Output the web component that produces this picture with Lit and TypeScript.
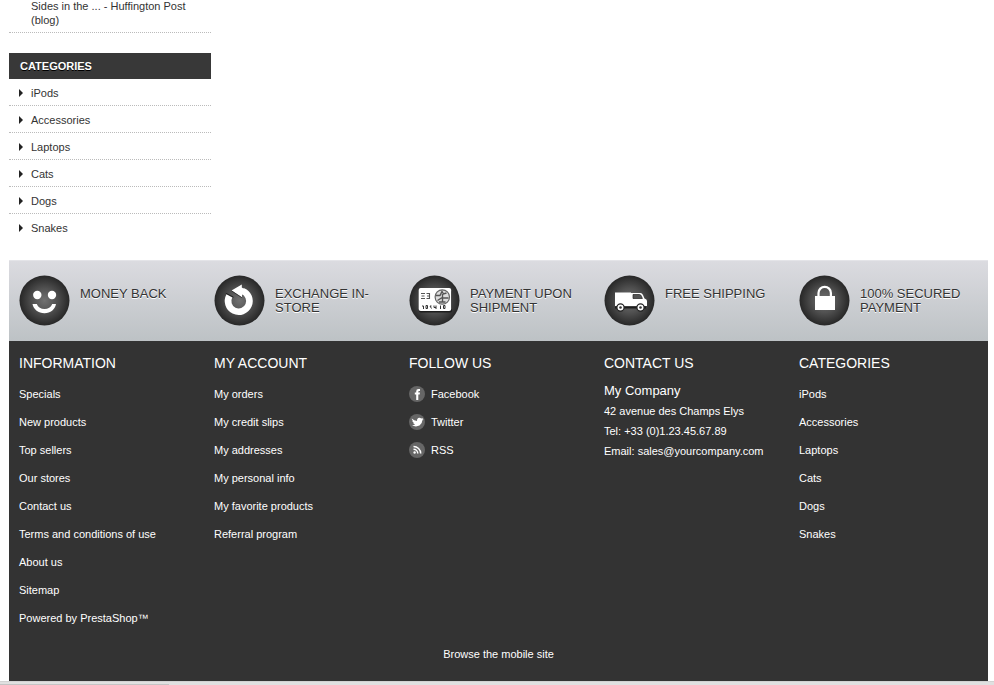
import { LitElement, html, css, svg } from "lit";
import { customElement } from "lit/decorators.js";

const categories = ["iPods", "Accessories", "Laptops", "Cats", "Dogs", "Snakes"];

const information = [
  "Specials",
  "New products",
  "Top sellers",
  "Our stores",
  "Contact us",
  "Terms and conditions of use",
  "About us",
  "Sitemap",
  "Powered by PrestaShop™",
];

const account = [
  "My orders",
  "My credit slips",
  "My addresses",
  "My personal info",
  "My favorite products",
  "Referral program",
];

const smile = svg`
  <circle cx="18.300" cy="20" r="4.200" fill="#fff"/>
  <circle cx="33" cy="20" r="4.200" fill="#fff"/>
  <path d="M13.500 29H17.800C19 32.500 22 34 25.500 34S32 32.500 33.200 29H37C36 34.500 31.500 38.200 25.500 38.200S14.500 34.500 13.500 29Z" fill="#fff"/>`;

const exchange = svg`
  <path d="M15.400 20.800A10.700 10.700 0 1 0 28.500 16" fill="none" stroke="#fff" stroke-width="6.600"/>
  <path d="M11.800 18.200L19.500 22.200" stroke="#222" stroke-width="1"/>
  <path d="M17.500 15.600L27.800 9.600V12.600L31 14.500L28 19.500V22.500Z" fill="#fff"/>
  <path d="M17.500 15.800L28 22.700" stroke="#222" stroke-width=".8"/>`;

const card = svg`
  <rect x="10" y="15" width="33" height="22.500" rx="2" fill="#1c1c1c"/>
  <rect x="9.700" y="13" width="32.500" height="23" rx="2" fill="#fff"/>
  <path d="M12 18.500h4M12.500 21h3M12 23.500h4M17.500 18.500h3.500M18 21h2.500M17.500 23.500h3.500M20.500 18v6" stroke="#555" stroke-width="1.100"/>
  <circle cx="33.300" cy="22" r="7.200" fill="#ddd" stroke="#666" stroke-width="1.200"/>
  <path d="M27 20.500h4l2-4 1.500 2.500 3-1M28.500 25.500l4-2.500h7M33.500 19v8.500M30 27h6.500" fill="none" stroke="#555" stroke-width="1.400"/>
  <path d="M13 31h1.500v3M17 30.500v3h1.500v-3zM22.500 31h-1.500l1.500 2.500M25 30.500v2h2M27 30.500v3.500M31.500 30.500v3.500M34.500 30.500h1.500v3h-1.500z" fill="none" stroke="#333" stroke-width="1"/>`;

const truck = svg`
  <path d="M11 32.500H42" stroke="#1c1c1c" stroke-width="2"/>
  <path d="M11 17.500H27V18H36.500Q38 18 39 20L40.500 23.500Q43 24 43 26V31H11Z" fill="#fff"/>
  <path d="M29 19.500h6.500q1.300 0 2 1.800l.9 2.200H29Z" fill="#555" stroke="#222" stroke-width=".7"/>
  <circle cx="16.500" cy="32.500" r="3.600" fill="#fff" stroke="#222" stroke-width="1.200"/>
  <circle cx="16.500" cy="32.500" r="1.300" fill="#333"/>
  <circle cx="36.500" cy="32.500" r="3.600" fill="#fff" stroke="#222" stroke-width="1.200"/>
  <circle cx="36.500" cy="32.500" r="1.300" fill="#333"/>`;

const padlock = svg`
  <path d="M19.500 21V18a6.200 6.200 0 0 1 12.400 0V21" fill="none" stroke="#fff" stroke-width="2.200"/>
  <rect x="16" y="21" width="20" height="14" fill="#fff"/>`;

const benefits = [
  { label: "Money back", art: smile },
  { label: "Exchange in-store", art: exchange },
  { label: "Payment upon shipment", art: card },
  { label: "Free shipping", art: truck },
  { label: "100% secured payment", art: padlock },
];

const networks = [
  {
    label: "Facebook",
    art: svg`<path d="M7.200 14V8.600H5.800V6.600H7.200V5.300Q7.200 3 9.500 3H11V5H10Q9.300 5 9.300 5.700V6.600H11L10.700 8.600H9.300V14Z" fill="#fff"/>`,
  },
  {
    label: "Twitter",
    art: svg`<path d="M2.800 4.500Q5 6.800 8 6.900Q7.900 4 10.300 3.800Q11.500 3.800 12.200 4.500L14 4L13.300 5.200L14.500 5.400L13.300 6.600Q13.200 10 10.500 11.600Q6.500 13.300 3 11.300Q5 11.300 6.200 10.300Q4.500 10 4 8.800H5Q3.200 7.900 3.200 6.400L4 6.600Q2.500 5.600 2.800 4.500Z" fill="#fff"/>`,
  },
  {
    label: "RSS",
    art: svg`<circle cx="5.600" cy="10.500" r="1.200" fill="#fff"/><path d="M4.500 7.300A4.300 4.300 0 0 1 8.800 11.600M4.500 4.500A7.200 7.200 0 0 1 11.700 11.600" fill="none" stroke="#fff" stroke-width="1.500"/>`,
  },
];

@customElement("app-root")
export class AppRoot extends LitElement {
  static styles = css`
    :host {
      display: flow-root;
      background: #fff;
      color: #333;
      font: 11px/14px "Liberation Sans", Arial, sans-serif;
    }
    a {
      color: inherit;
      text-decoration: none;
    }
    h2,
    h3,
    p,
    ul {
      margin: 0;
      padding: 0;
      font-weight: normal;
    }
    ul {
      list-style: none;
    }
    .page {
      margin: -1px 6px 0 9px;
    }
    .sidebar {
      width: 202px;
      padding-bottom: 20px;
    }
    .news {
      padding: 0 22px 5px;
      border-bottom: 1px dotted #bbb;
      margin-bottom: 20px;
    }
    .side-title {
      padding: 0 11px;
      background: #383838;
      color: #fff;
      font-size: 11px;
      font-weight: bold;
      line-height: 26px;
      text-transform: uppercase;
      text-shadow: 0 1px 0 #000;
    }
    .side-list li {
      display: flex;
      align-items: center;
      gap: 8px;
      padding: 7px 10px 5px;
      border-bottom: 1px dotted #bbb;
    }
    .side-list li:last-child {
      border-bottom: 0;
    }
    .side-list li::before {
      content: "";
      border: 4px solid transparent;
      border-left-color: #222;
      border-right-width: 0;
    }
    .columns {
      display: grid;
      grid-template-columns: repeat(5, minmax(0, 1fr));
      column-gap: 16px;
      padding: 0 10px;
    }
    .benefits {
      box-sizing: border-box;
      min-height: 81px;
      padding-top: 14px;
      border-top: 1px solid #e4e4e8;
      background: linear-gradient(#dbdbe0, #bdc2c5);
    }
    .benefits li {
      display: flex;
      gap: 10px;
      font-size: 13px;
      text-transform: uppercase;
      text-shadow: 0 1px 0 #fff;
    }
    .benefits span {
      padding-top: 12px;
    }
    .badge {
      flex: none;
      width: 51px;
      height: 51px;
    }
    .footer {
      background: #333;
      color: #fff;
    }
    .footer .columns {
      padding-top: 15px;
    }
    .footer h2 {
      margin-bottom: 10px;
      font-size: 14px;
      text-transform: uppercase;
    }
    .footer li {
      display: flex;
      align-items: center;
      gap: 6px;
      height: 28px;
    }
    .footer svg {
      width: 16px;
      height: 16px;
    }
    .footer h3 {
      padding: 3px 0 2px;
      font-size: 13px;
      line-height: 16px;
    }
    .footer address {
      font-style: normal;
      line-height: 20px;
    }
    .mobile {
      padding: 15px 0 20px;
      text-align: center;
    }
    .status {
      height: 3px;
      border-top: 1px solid #d2d2d2;
      background: #e0e0e0;
    }
    .status::before {
      content: "";
      display: block;
      width: 17%;
      height: 1px;
      border-top: 2px solid #e0e0e0;
      background: #c4c4c4;
    }
  `;

  private links(items: string[]) {
    return html`<ul>
      ${items.map((item) => html`<li><a href="#">${item}</a></li>`)}
    </ul>`;
  }

  render() {
    return html`
      <div class="page">
        <aside class="sidebar">
          <p class="news">
            <a href="#">Sides in the ... - Huffington Post (blog)</a>
          </p>
          <h2 class="side-title">Categories</h2>
          <nav class="side-list">${this.links(categories)}</nav>
        </aside>

        <ul class="benefits columns">
          ${benefits.map(
            (b) => html`<li>
              <svg class="badge" viewBox="0 0 51 51" aria-hidden="true">
                <defs>
                  <radialGradient id="disc">
                    <stop offset="0" stop-color="#717171" />
                    <stop offset=".5" stop-color="#505050" />
                    <stop offset="1" stop-color="#272727" />
                  </radialGradient>
                </defs>
                <circle cx="25.500" cy="25.500" r="25" fill="url(#disc)" />
                ${b.art}
              </svg>
              <span>${b.label}</span>
            </li>`
          )}
        </ul>

        <footer class="footer">
          <div class="columns">
            <nav>
              <h2>Information</h2>
              ${this.links(information)}
            </nav>
            <nav>
              <h2>My account</h2>
              ${this.links(account)}
            </nav>
            <section>
              <h2>Follow us</h2>
              <ul>
                ${networks.map(
                  (n) => html`<li>
                    <svg viewBox="0 0 16 16" aria-hidden="true">
                      <circle cx="8" cy="8" r="8" fill="#666" />
                      ${n.art}
                    </svg>
                    <a href="#">${n.label}</a>
                  </li>`
                )}
              </ul>
            </section>
            <section>
              <h2>Contact us</h2>
              <h3>My Company</h3>
              <address>
                42 avenue des Champs Elys<br />
                Tel: +33 (0)1.23.45.67.89<br />
                Email: <a href="mailto:sales@yourcompany.com">sales@yourcompany.com</a>
              </address>
            </section>
            <nav>
              <h2>Categories</h2>
              ${this.links(categories)}
            </nav>
          </div>
          <p class="mobile"><a href="#">Browse the mobile site</a></p>
        </footer>
      </div>
      <div class="status"></div>
    `;
  }
}
